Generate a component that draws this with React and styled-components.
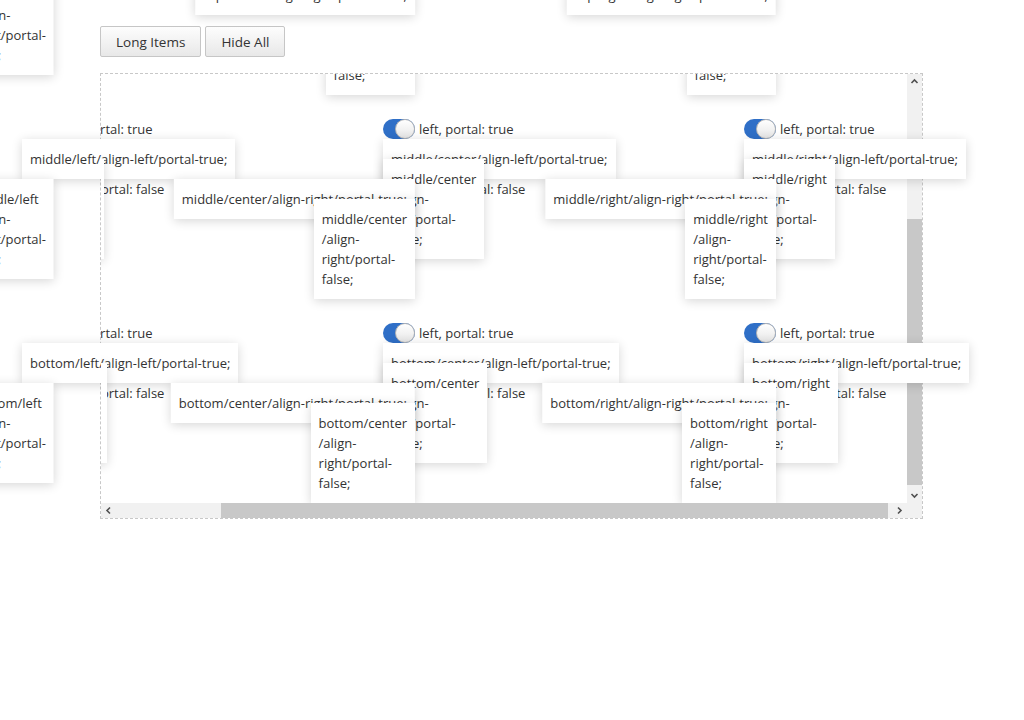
import React, { useLayoutEffect, useRef, useState } from "react";
import { createPortal } from "react-dom";
import styled, { createGlobalStyle } from "styled-components";

const GlobalStyle = createGlobalStyle`
  html, body { margin: 0; padding: 0; background: #fff; }
  body { font-family: "Open Sans", "Noto Sans", sans-serif; color: #333; }
`;

const Page = styled.div`
  padding: 26px 0 0 100px;
`;

const Toolbar = styled.div`
  display: flex;
  gap: 4px;
  margin-bottom: 16px;
`;

const Button = styled.button`
  height: 31px;
  padding: 0 15px;
  font-family: "Open Sans", sans-serif;
  font-size: 13.5px;
  color: #333;
  background: linear-gradient(#fdfdfd, #e8e8e8);
  border: 1px solid #c6c6c6;
  border-radius: 2px;
  cursor: pointer;
`;

const Scroller = styled.div`
  width: 823px;
  height: 446px;
  box-sizing: border-box;
  border: 1px dashed #c8c8c8;
  display: grid;
  grid-template-columns: 1fr 15px;
  grid-template-rows: 1fr 15px;
`;

const Viewport = styled.div`
  overflow: hidden;
  min-width: 0;
  min-height: 0;
`;

const Grid = styled.div`
  box-sizing: border-box;
  width: 938px;
  padding: 50px 48px 5px;
  display: grid;
  grid-template-columns: repeat(3, 120px);
  grid-auto-rows: 180px;
  column-gap: 241px;
  row-gap: 24px;
`;

const Cell = styled.div`
  display: flex;
  flex-direction: column;
  align-items: flex-start;
  gap: 40px;
`;

const SwitchRow = styled.div`
  display: flex;
  align-items: center;
  gap: 4px;
  height: 20px;
  white-space: nowrap;
  font-size: 13px;
  line-height: 20px;
  color: #333;
`;

const Anchor = styled.div`
  position: relative;
  flex: none;
  width: 32px;
  height: 20px;
`;

const Track = styled.span`
  display: flex;
  justify-content: ${(p) => (p.$on ? "flex-end" : "flex-start")};
  box-sizing: border-box;
  width: 32px;
  height: 20px;
  border-radius: 10px;
  background: ${(p) => (p.$on ? "#2f6fc7" : "#ccc")};
`;

const Knob = styled.span`
  box-sizing: border-box;
  width: 20px;
  height: 20px;
  border-radius: 50%;
  border: 1px solid #b5b5b5;
  background: linear-gradient(#ffffff, #e6e6e6);
`;

const Popup = styled.div`
  position: absolute;
  z-index: ${(p) => p.$z};
  box-sizing: border-box;
  width: max-content;
  padding: 10px 8px;
  background: #fff;
  color: #333;
  font-family: "Open Sans", "Noto Sans", sans-serif;
  font-size: 13px;
  line-height: 20px;
  white-space: nowrap;
  box-shadow: 0 2px 10px rgba(0, 0, 0, 0.16);
`;

const InlinePopup = styled(Popup)`
  top: ${(p) => p.$top}px;
  ${(p) => (p.$side === "right" ? "right: 0;" : "left: 0;")}
`;

const Line = styled.span`
  display: block;
`;

/* drawn scrollbars */
const Bar = styled.div`
  display: flex;
  flex-direction: ${(p) => (p.$vertical ? "column" : "row")};
  background: #f1f1f1;
  min-width: 0;
  min-height: 0;
`;

const ArrowButton = styled.div`
  flex: none;
  width: 15px;
  height: 15px;
  display: flex;
  align-items: center;
  justify-content: center;
  color: #505050;
`;

const BarTrack = styled.div`
  flex: 1;
  display: flex;
  flex-direction: ${(p) => (p.$vertical ? "column" : "row")};
  min-width: 0;
  min-height: 0;
`;

const Thumb = styled.div`
  flex: none;
  background: #c8c8c8;
`;

const Corner = styled.div`
  background: #f1f1f1;
`;

const ROWS = ["top", "middle", "bottom"];
const COLS = ["left", "center", "right"];

const SCROLL_LEFT = 127;
const SCROLL_TOP = 209;

function Chevron({ dir }) {
  const rot = { up: 0, right: 90, down: 180, left: 270 }[dir];
  return (
    <svg width="9" height="9" viewBox="0 0 9 9" style={{ transform: `rotate(${rot}deg)` }}>
      <path d="M1.5 6 L4.5 3 L7.5 6" fill="none" stroke="currentColor" strokeWidth="1.6" />
    </svg>
  );
}

function PopupText({ row, col, align, portal, narrow }) {
  const parts = [`${row}/${col}`, "/align-", `${align}/portal-`, `${portal};`];
  if (!narrow) return parts.join("");
  return parts.map((t, i) => <Line key={i}>{t}</Line>);
}

function Switch({ on }) {
  return (
    <Track $on={on}>
      <Knob />
    </Track>
  );
}

export default function App() {
  const viewportRef = useRef(null);
  const anchorRefs = useRef({});
  const [state, setState] = useState(null);

  useLayoutEffect(() => {
    const v = viewportRef.current;
    v.scrollLeft = SCROLL_LEFT;
    v.scrollTop = SCROLL_TOP;
    const out = {};
    Object.entries(anchorRefs.current).forEach(([k, el]) => {
      if (!el) return;
      const r = el.getBoundingClientRect();
      out[k] = {
        left: r.left + window.scrollX,
        right: r.right + window.scrollX,
        top: r.top + window.scrollY,
      };
    });
    setState({
      rects: out,
      cw: v.clientWidth,
      ch: v.clientHeight,
      sw: v.scrollWidth,
      sh: v.scrollHeight,
      sl: v.scrollLeft,
      st: v.scrollTop,
    });
  }, []);

  const cells = [];
  ROWS.forEach((row, ri) =>
    COLS.forEach((col, ci) => cells.push({ row, col, base: (ri * 3 + ci) * 4 }))
  );

  let hThumb = { size: 667, pos: 106 };
  let vThumb = { size: 266, pos: 130 };
  if (state) {
    const hTrack = state.cw - 30;
    const vTrack = state.ch - 30;
    const hs = (hTrack * state.cw) / state.sw;
    const vs = (vTrack * state.ch) / state.sh;
    hThumb = {
      size: hs,
      pos: state.sw > state.cw ? ((hTrack - hs) * state.sl) / (state.sw - state.cw) : 0,
    };
    vThumb = {
      size: vs,
      pos: state.sh > state.ch ? ((vTrack - vs) * state.st) / (state.sh - state.ch) : 0,
    };
  }

  return (
    <Page>
      <GlobalStyle />
      <Toolbar>
        <Button>Long Items</Button>
        <Button>Hide All</Button>
      </Toolbar>
      <Scroller>
        <Viewport ref={viewportRef}>
          <Grid>
            {cells.map(({ row, col, base }) => {
              const key = `${row}-${col}`;
              return (
                <Cell key={key}>
                  <SwitchRow>
                    <Anchor ref={(el) => (anchorRefs.current[key] = el)}>
                      <Switch on />
                      <InlinePopup $z={base + 2} $top={40} $side="left">
                        <PopupText row={row} col={col} align="left" portal="false" narrow />
                      </InlinePopup>
                      <InlinePopup $z={base + 4} $top={80} $side="right">
                        <PopupText row={row} col={col} align="right" portal="false" narrow />
                      </InlinePopup>
                    </Anchor>
                    left, portal: true
                  </SwitchRow>
                  <SwitchRow>
                    <Anchor>
                      <Switch on />
                    </Anchor>
                    right, portal: false
                  </SwitchRow>
                </Cell>
              );
            })}
          </Grid>
        </Viewport>
        <Bar $vertical>
          <ArrowButton>
            <Chevron dir="up" />
          </ArrowButton>
          <BarTrack $vertical>
            <Thumb style={{ marginTop: vThumb.pos, height: vThumb.size }} />
          </BarTrack>
          <ArrowButton>
            <Chevron dir="down" />
          </ArrowButton>
        </Bar>
        <Bar>
          <ArrowButton>
            <Chevron dir="left" />
          </ArrowButton>
          <BarTrack>
            <Thumb style={{ marginLeft: hThumb.pos, width: hThumb.size }} />
          </BarTrack>
          <ArrowButton>
            <Chevron dir="right" />
          </ArrowButton>
        </Bar>
        <Corner />
      </Scroller>
      {state &&
        createPortal(
          <>
            {cells.map(({ row, col, base }) => {
              const r = state.rects[`${row}-${col}`];
              if (!r) return null;
              const narrowRight = r.right < 260;
              return (
                <React.Fragment key={`${row}-${col}-p`}>
                  <Popup $z={base + 1} style={{ left: r.left, top: r.top + 20 }}>
                    <PopupText row={row} col={col} align="left" portal="true" />
                  </Popup>
                  <Popup
                    $z={base + 3}
                    style={{ left: r.right, top: r.top + 60, transform: "translateX(-100%)" }}
                  >
                    <PopupText row={row} col={col} align="right" portal="true" narrow={narrowRight} />
                  </Popup>
                </React.Fragment>
              );
            })}
          </>,
          document.body
        )}
    </Page>
  );
}
